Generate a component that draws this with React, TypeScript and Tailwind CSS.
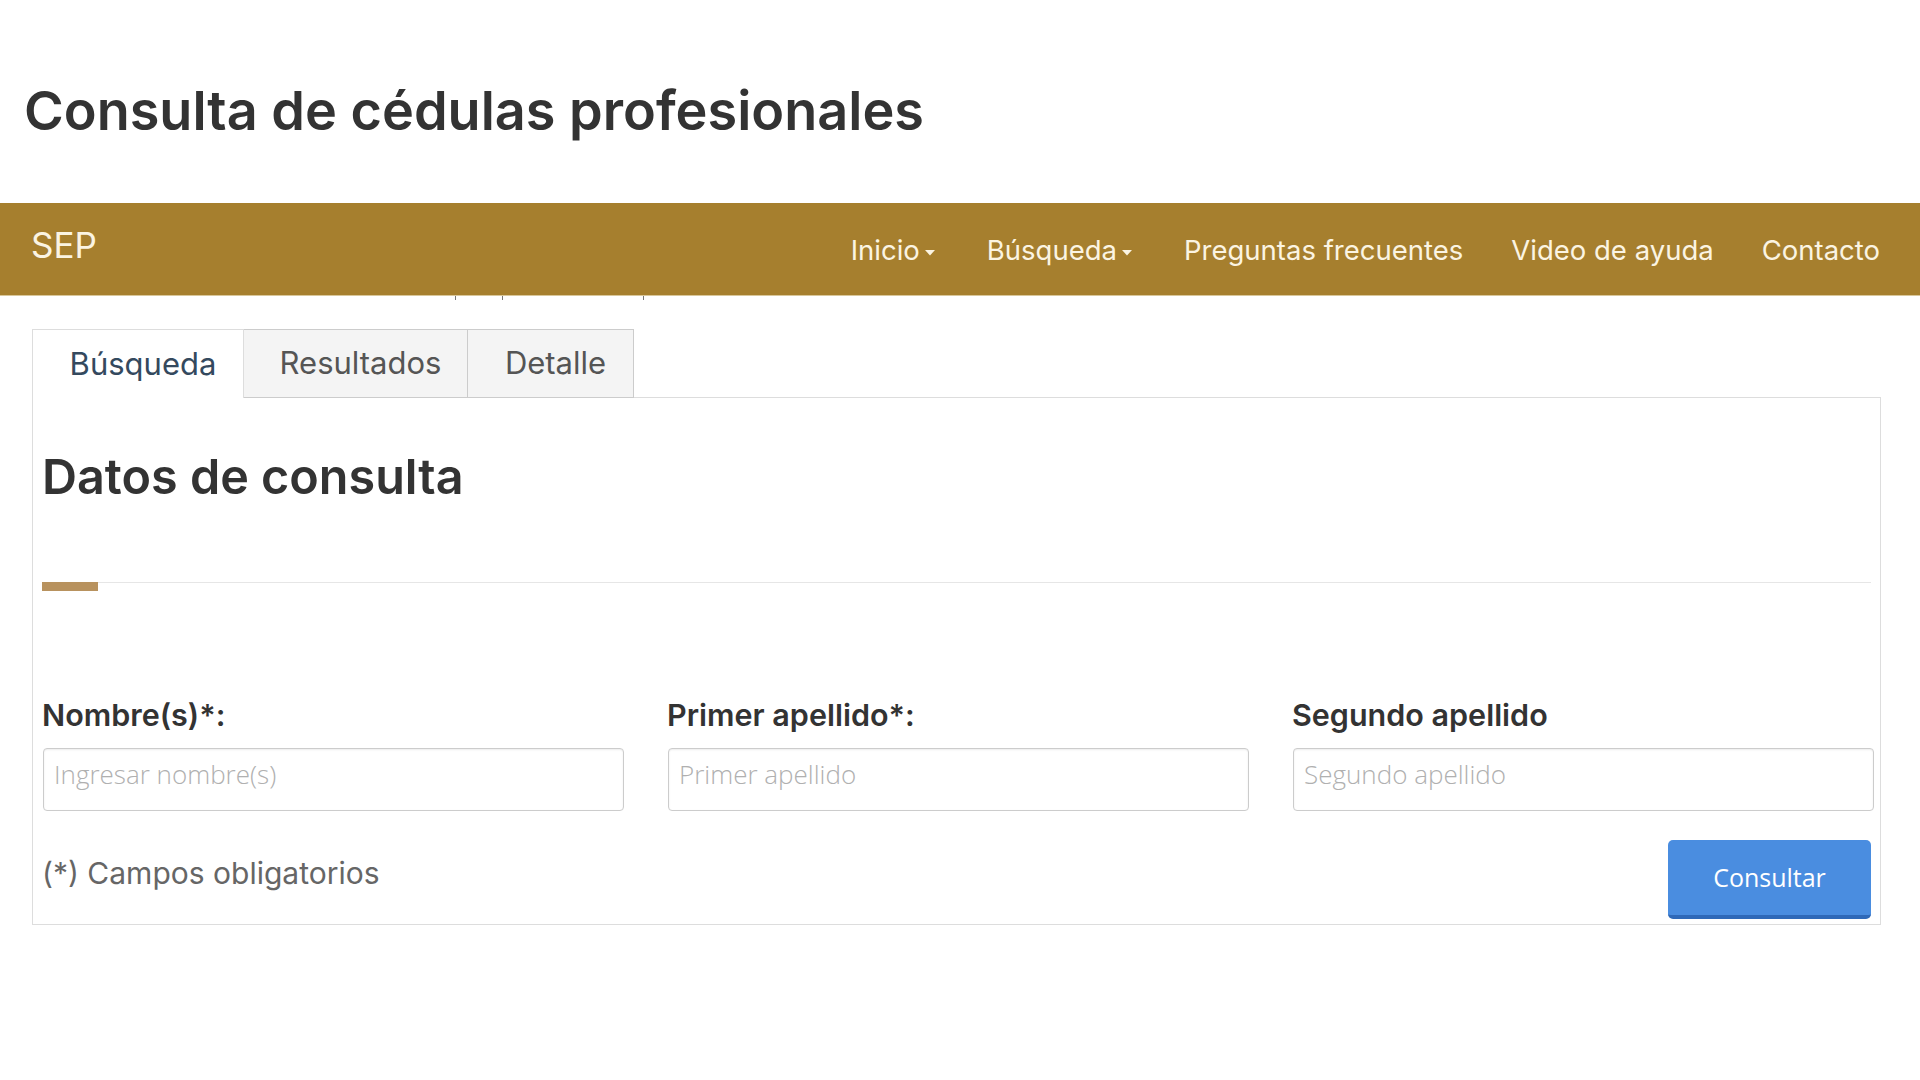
import React from "react";

const mont = { fontFamily: "Inter, 'Noto Sans', sans-serif" };
const open = { fontFamily: "'Open Sans', 'Noto Sans', sans-serif" };

function Caret() {
  return (
    <svg width="10" height="6" viewBox="0 0 10 6" className="ml-[5px] mt-[4px]">
      <path d="M0 0 L10 0 L5 5.5 Z" fill="#fbf4e2" />
    </svg>
  );
}

function NavItem({ label, caret }: { label: string; caret?: boolean }) {
  return (
    <div className={`flex items-center pl-[24px] text-[27.5px] text-[#fbf4e2] ${caret ? "pr-[28px]" : "pr-[24px]"}`}>
      <span>{label}</span>
      {caret && <Caret />}
    </div>
  );
}

function Field({ label, placeholder }: { label: string; placeholder: string }) {
  return (
    <div className="flex flex-col">
      <label className="text-[30.5px] leading-[34px] font-semibold text-[#333333]" style={mont}>
        {label}
      </label>
      <input
        placeholder={placeholder}
        className="mt-[16px] ml-[1px] h-[63px] w-full rounded-[4px] border border-[#cccccc] bg-white px-[10px] pb-[11px] text-[26px] font-light text-[#555] shadow-[inset_0_1px_2px_rgba(0,0,0,0.08)] outline-none placeholder:text-[#b0b0b0]"
        style={open}
      />
    </div>
  );
}

export default function App() {
  return (
    <div className="min-h-[1080px] w-[1920px] bg-white" style={mont}>
      <div className="flex h-[203px] items-center pl-[24px] pt-[18px]">
        <h1 className="text-[54px] font-semibold text-[#333333]">Consulta de cédulas profesionales</h1>
      </div>

      <nav className="flex h-[93px] items-center justify-between border-b border-[#d9c79a] bg-[#a67f2e] pr-[16px]">
        <div className="pl-[31px] pb-[8px] text-[35px] text-[#fbf4e2]">SEP</div>
        <div className="flex items-center pt-[4px]">
          <NavItem label="Inicio" caret />
          <NavItem label="Búsqueda" caret />
          <NavItem label="Preguntas frecuentes" />
          <NavItem label="Video de ayuda" />
          <NavItem label="Contacto" />
        </div>
      </nav>

      <div className="flex h-[4px]">
        <div className="ml-[455px] h-[4px] w-[1px] bg-[#777]" />
        <div className="ml-[46px] h-[4px] w-[1px] bg-[#777]" />
        <div className="ml-[140px] h-[4px] w-[1px] bg-[#777]" />
      </div>

      <div className="ml-[32px] mt-[29px] w-[1849px]">
        <div className="flex h-[69px]">
          <div className="flex w-[212px] items-center justify-center border border-b-0 border-[#dddddd] bg-white pl-[10px] text-[31px] text-[#34495e]">
            Búsqueda
          </div>
          <div className="flex w-[224px] items-center justify-center border border-l-0 border-[#cccccc] bg-[#f4f4f4] pl-[10px] text-[31px] text-[#555555]">
            Resultados
          </div>
          <div className="flex w-[166px] items-center justify-center border border-l-0 border-[#cccccc] bg-[#f4f4f4] pl-[10px] text-[31px] text-[#555555]">
            Detalle
          </div>
          <div className="flex-1 border-b border-[#dddddd]" />
        </div>

        <div className="border border-t-0 border-[#dddddd] pl-[9px] pr-[7px] pt-[52px] pb-[5px]">
          <h2 className="text-[48.5px] leading-[53px] font-semibold text-[#333333]">Datos de consulta</h2>

          <div className="mt-[79px] h-[1px] w-[1829px] bg-[#e6e6e6]" />
          <div className="-mt-[1px] h-[9px] w-[56px] bg-[#b8925e]" />

          <div className="mt-[107px] grid grid-cols-3 gap-x-[44px]">
            <Field label="Nombre(s)*:" placeholder="Ingresar nombre(s)" />
            <Field label="Primer apellido*:" placeholder="Primer apellido" />
            <Field label="Segundo apellido" placeholder="Segundo apellido" />
          </div>

          <div className="mt-[29px] flex items-start justify-between">
            <div className="mt-[16px] text-[30px] leading-[34px] text-[#666666]">(*) Campos obligatorios</div>
            <button
              className="mr-[2px] h-[79px] w-[203px] rounded-[5px] border-b-[4px] border-[#2f69b8] bg-[#4a8de0] text-[25px] text-white"
              style={open}
            >
              Consultar
            </button>
          </div>
        </div>
      </div>
    </div>
  );
}
